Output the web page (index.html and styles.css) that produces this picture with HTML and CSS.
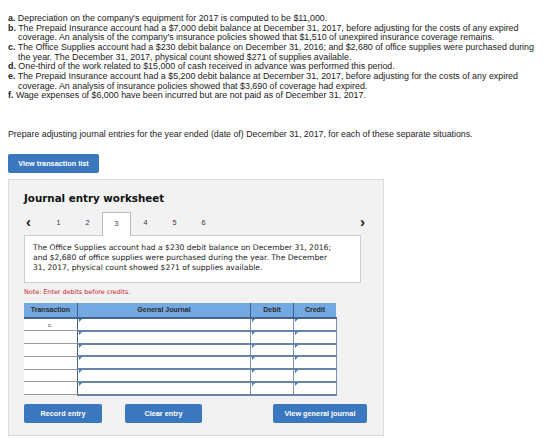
FILE: index.html
```html
<!DOCTYPE html>
<html lang="en">
<head>
    <meta charset="UTF-8">
    <title>Adjusting Entries</title>
    <link rel="stylesheet" href="styles.css">
</head>
<body>
    <ol class="situations">
        <li><b>a.</b> Depreciation on the company's equipment for 2017 is computed to be $11,000.</li>
        <li><b>b.</b> The Prepaid Insurance account had a $7,000 debit balance at December 31, 2017, before adjusting for the costs of any expired<br>coverage. An analysis of the company's insurance policies showed that $1,510 of unexpired insurance coverage remains.</li>
        <li><b>c.</b> The Office Supplies account had a $230 debit balance on December 31, 2016; and $2,680 of office supplies were purchased during<br>the year. The December 31, 2017, physical count showed $271 of supplies available.</li>
        <li><b>d.</b> One-third of the work related to $15,000 of cash received in advance was performed this period.</li>
        <li><b>e.</b> The Prepaid Insurance account had a $5,200 debit balance at December 31, 2017, before adjusting for the costs of any expired<br>coverage. An analysis of insurance policies showed that $3,690 of coverage had expired.</li>
        <li><b>f.</b> Wage expenses of $6,000 have been incurred but are not paid as of December 31, 2017.</li>
    </ol>

    <p class="prompt">Prepare adjusting journal entries for the year ended (date of) December 31, 2017, for each of these separate situations.</p>

    <button class="btn btn-list">View transaction list</button>

    <div class="worksheet">
        <h2>Journal entry worksheet</h2>

        <div class="tabs">
            <span class="arrow">&lsaquo;</span>
            <span class="tab">1</span>
            <span class="tab">2</span>
            <span class="tab active">3</span>
            <span class="tab">4</span>
            <span class="tab">5</span>
            <span class="tab">6</span>
            <span class="arrow next">&rsaquo;</span>
        </div>

        <div class="situation-box">
            The Office Supplies account had a $230 debit balance on December 31, 2016;<br>
            and $2,680 of office supplies were purchased during the year. The December<br>
            31, 2017, physical count showed $271 of supplies available.
        </div>

        <p class="note">Note: Enter debits before credits.</p>

        <table class="journal">
            <thead>
                <tr>
                    <th class="col-tr">Transaction</th>
                    <th class="col-gj">General Journal</th>
                    <th class="col-amt">Debit</th>
                    <th class="col-amt">Credit</th>
                </tr>
            </thead>
            <tbody>
                <tr><td class="tr">c.</td><td class="in"></td><td class="in"></td><td class="in"></td></tr>
                <tr><td class="tr"></td><td class="in"></td><td class="in"></td><td class="in"></td></tr>
                <tr><td class="tr"></td><td class="in"></td><td class="in"></td><td class="in"></td></tr>
                <tr><td class="tr"></td><td class="in"></td><td class="in"></td><td class="in"></td></tr>
                <tr><td class="tr"></td><td class="in"></td><td class="in"></td><td class="in"></td></tr>
                <tr><td class="tr"></td><td class="in"></td><td class="in"></td><td class="in"></td></tr>
            </tbody>
        </table>

        <div class="actions">
            <button class="btn btn-record">Record entry</button>
            <button class="btn btn-clear">Clear entry</button>
            <button class="btn btn-view">View general journal</button>
        </div>
    </div>
</body>
</html>
```

FILE: styles.css
```css
/* Page */
body {
    margin: 0;
    padding: 0 8px;
    font-family: 'Liberation Sans', Arial, sans-serif;
    color: #222;
    background: #fff;
}

/* Situation list */
.situations {
    list-style: none;
    margin: 14px 0 0;
    padding: 0;
    font-size: 8.9px;
    line-height: 9.65px;
    white-space: nowrap;
}
.situations li {
    padding-left: 10px;
    text-indent: -10px;
}
.prompt {
    margin: 28px 0 0;
    font-size: 8.8px;
    line-height: 10px;
}

/* Buttons */
.btn {
    display: block;
    height: 19px;
    padding: 0;
    border: none;
    border-radius: 2px;
    background: #3a77be;
    color: #fff;
    font-family: 'Liberation Sans', Arial, sans-serif;
    font-weight: bold;
    font-size: 7.3px;
    cursor: pointer;
}
.btn-list {
    margin-top: 15px;
    width: 91px;
}

/* Worksheet panel */
.worksheet {
    margin-top: 6px;
    width: 376px;
    height: 257px;
    box-sizing: border-box;
    padding: 11px 0 0 15px;
    background: #f2f2f2;
    border: 1px solid #dcdcdc;
}
.worksheet h2 {
    margin: 0;
    font-family: 'DejaVu Sans', Verdana, sans-serif;
    font-size: 10.3px;
    line-height: 14px;
    color: #111;
}

/* Tabs */
.tabs {
    display: flex;
    align-items: stretch;
    margin-top: 7px;
    width: 344px;
    height: 23px;
    font-size: 7.2px;
    color: #333;
}
.tabs .arrow {
    width: 20px;
    padding-left: 2px;
    box-sizing: border-box;
    font-size: 15px;
    line-height: 19px;
    font-weight: bold;
    color: #222;
}
.tabs .next {
    margin-left: auto;
    width: 10px;
}
.tab {
    width: 29px;
    display: flex;
    align-items: center;
    justify-content: center;
    box-sizing: border-box;
    padding-bottom: 1px;
}
.tab.active {
    background: #fff;
    border: 1px solid #bdbdbd;
    border-bottom: none;
    margin-bottom: -1px;
    position: relative;
    z-index: 1;
}

/* Situation text box */
.situation-box {
    width: 337px;
    box-sizing: border-box;
    padding: 7px 8px 9px;
    background: #fff;
    border: 1px solid #cdcdcd;
    font-family: 'DejaVu Sans', Verdana, sans-serif;
    font-size: 7.6px;
    line-height: 10px;
    white-space: nowrap;
    color: #222;
}

.note {
    margin: 5px 0 0;
    font-family: 'DejaVu Sans', Verdana, sans-serif;
    font-size: 6.4px;
    line-height: 9px;
    color: #c8202a;
}

/* Journal table */
.journal {
    margin-top: 6px;
    width: 310px;
    border-collapse: collapse;
    table-layout: fixed;
}
.journal th {
    height: 14px;
    padding: 0;
    background: #74a8e0;
    border-left: 1px solid #3f5f85;
    border-bottom: 2px solid #44648b;
    font-size: 7px;
    font-weight: bold;
    color: #2a2a2a;
    text-align: center;
}
.journal th:first-child {
    border-left: none;
}
.col-tr { width: 53px; }
.col-gj { width: 172px; }
.col-amt { width: 42px; }

.journal td {
    height: 10.8px;
    padding: 0;
    background: #fff;
}
.journal td.tr {
    border-bottom: 1px solid #9a9a9a;
    text-align: center;
    font-size: 6.2px;
    color: #444;
}
.journal td.in {
    position: relative;
    border-left: 1px solid #4d5d73;
    border-right: 1px solid #7d93b0;
    border-top: 1px solid #b5c4d8;
    border-bottom: 2px solid #6883a8;
}
/* small blue marker in the corner of each entry cell */
.journal td.in::before {
    content: "";
    position: absolute;
    left: 1px;
    top: 0;
    border-top: 3px solid #3b78c8;
    border-right: 3px solid transparent;
}

/* Bottom buttons */
.actions {
    display: flex;
    margin-top: 8px;
    width: 343px;
}
.btn-record { width: 78px; }
.btn-clear { width: 77px; margin-left: 23px; }
.btn-view { width: 94px; margin-left: auto; }
```
